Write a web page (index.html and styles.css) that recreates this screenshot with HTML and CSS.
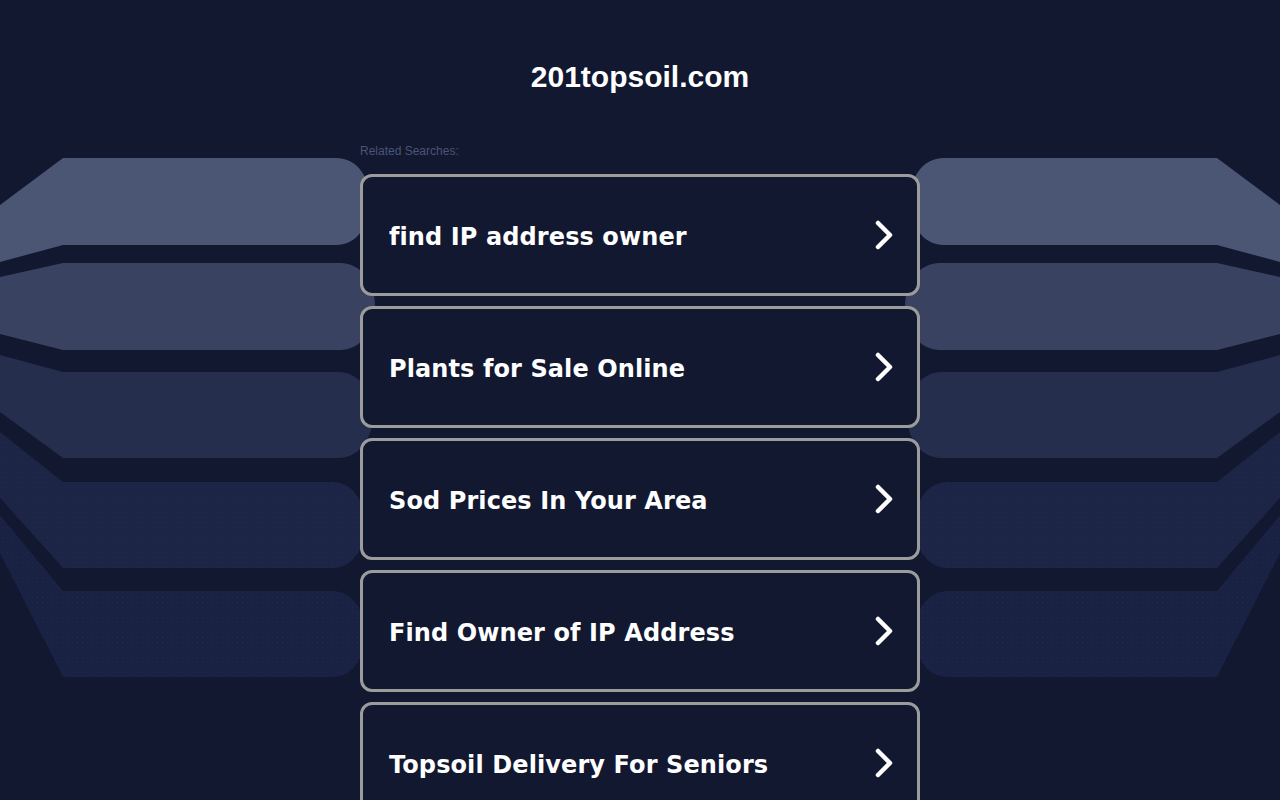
FILE: index.html
```html
<!DOCTYPE html>
<html lang="en">
<head>
<meta charset="utf-8">
<title>201topsoil.com</title>
<link rel="stylesheet" href="styles.css">
</head>
<body>
<div class="backdrop" aria-hidden="true">
  <svg width="1280" height="800" viewBox="0 0 1280 800" xmlns="http://www.w3.org/2000/svg">
    <defs>
      <pattern id="dots" width="5" height="5" patternUnits="userSpaceOnUse">
        <rect x="2" y="2" width="1" height="1" fill="#212a4c"/>
      </pattern>
      <g id="half">
        <path fill="#4b5574" d="M0,205 L63,158 L336,158 C358,158 370,178 370,201 C370,224 358,245 336,245 L63,245 L0,262 Z"/>
        <path fill="#3a4261" d="M0,277 L63,263 L340,263 C362,263 375,284 375,306 C375,328 362,350 340,350 L63,350 L0,334 Z"/>
        <path fill="#262e4d" d="M0,355 L63,372 L338,372 C360,372 373,393 373,415 C373,437 360,458 338,458 L63,458 L0,412 Z"/>
        <path fill="#1c2545" d="M0,432 L63,482 L332,482 C354,482 365,503 365,525 C365,547 354,568 332,568 L63,568 L0,498 Z"/>
        <path fill="url(#dots)" d="M0,432 L63,482 L332,482 C354,482 365,503 365,525 C365,547 354,568 332,568 L63,568 L0,498 Z"/>
        <path fill="#1a2244" d="M0,515 L63,591 L332,591 C354,591 365,612 365,634 C365,656 354,677 332,677 L63,677 L0,553 Z"/>
        <path fill="url(#dots)" d="M0,515 L63,591 L332,591 C354,591 365,612 365,634 C365,656 354,677 332,677 L63,677 L0,553 Z"/>
      </g>
    </defs>
    <use href="#half"/>
    <use href="#half" transform="translate(1280,0) scale(-1,1)"/>
  </svg>
</div>

<main class="page">
  <h1 class="domain">201topsoil.com</h1>
  <p class="label">Related Searches:</p>
  <ul class="links">
    <li><a class="link" href="#"><span>find IP address owner</span><svg class="chev" viewBox="0 0 20 30" width="20" height="30"><polyline points="4,3 16,15 4,27"/></svg></a></li>
    <li><a class="link" href="#"><span>Plants for Sale Online</span><svg class="chev" viewBox="0 0 20 30" width="20" height="30"><polyline points="4,3 16,15 4,27"/></svg></a></li>
    <li><a class="link" href="#"><span>Sod Prices In Your Area</span><svg class="chev" viewBox="0 0 20 30" width="20" height="30"><polyline points="4,3 16,15 4,27"/></svg></a></li>
    <li><a class="link" href="#"><span>Find Owner of IP Address</span><svg class="chev" viewBox="0 0 20 30" width="20" height="30"><polyline points="4,3 16,15 4,27"/></svg></a></li>
    <li><a class="link" href="#"><span>Topsoil Delivery For Seniors</span><svg class="chev" viewBox="0 0 20 30" width="20" height="30"><polyline points="4,3 16,15 4,27"/></svg></a></li>
  </ul>
</main>
</body>
</html>
```

FILE: styles.css
```css
html, body {
  margin: 0;
  padding: 0;
  background: #111830;
  height: 100%;
  overflow: hidden;
}

body {
  font-family: "Liberation Sans", Arial, sans-serif;
  color: #ffffff;
  position: relative;
}

.backdrop {
  position: absolute;
  top: 0;
  left: 0;
  width: 1280px;
  height: 800px;
  z-index: 0;
}

.backdrop svg {
  display: block;
}

.page {
  position: relative;
  z-index: 1;
  width: 560px;
  margin: 0 auto;
  padding-top: 58px;
}

.domain {
  margin: 0;
  font-size: 30px;
  line-height: 38px;
  font-weight: 700;
  text-align: center;
  color: #ffffff;
}

.label {
  margin: 48px 0 0;
  font-size: 12px;
  line-height: 14px;
  color: #4b5576;
}

.links {
  list-style: none;
  margin: 16px 0 0;
  padding: 0;
  display: flex;
  flex-direction: column;
  gap: 10px;
}

.link {
  display: flex;
  align-items: center;
  justify-content: space-between;
  box-sizing: border-box;
  height: 122px;
  padding: 3px 23px 0 26px;
  border: 3px solid #9c9c9c;
  border-radius: 12px;
  background: #111830;
  color: #ffffff;
  text-decoration: none;
  font-family: "DejaVu Sans", Verdana, sans-serif;
  font-weight: 700;
  font-size: 24px;
  letter-spacing: 0.1px;
}

.chev {
  flex: none;
  margin-top: -3px;
}

.chev polyline {
  fill: none;
  stroke: #ffffff;
  stroke-width: 4.5;
  stroke-linecap: round;
  stroke-linejoin: round;
}
```
